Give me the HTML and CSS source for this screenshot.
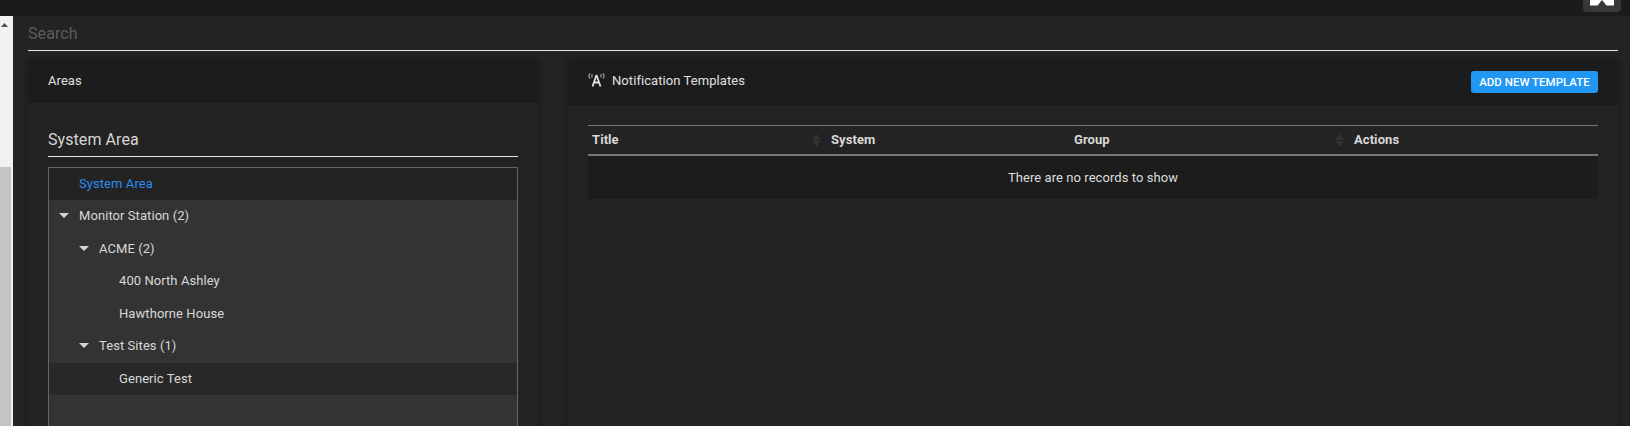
FILE: index.html
```html
<!DOCTYPE html>
<html lang="en">
<head>
<meta charset="utf-8">
<title>Notification Templates</title>
<link rel="stylesheet" href="styles.css">
</head>
<body>
<div class="topbar">
  <div class="logo-btn">
    <svg class="logo" width="24" height="6" viewBox="0 0 24 6"><path d="M0 0H24V5.500H16.500C15 4 13.500 1.500 12 0 10.500 1.500 9 4 7.500 5.500H0Z" fill="#fff"/></svg>
  </div>
</div>
<div class="shell">
  <div class="scrollbar">
    <svg class="scroll-arrow" width="9" height="6" viewBox="0 0 9 6"><path d="M4.500 1 8 5H1Z" fill="#505050"/></svg>
    <div class="scroll-thumb"></div>
  </div>
  <main class="main">
    <div class="search">Search</div>
    <div class="columns">
      <section class="card card-left">
        <header class="card-head head-left"><span class="card-title">Areas</span></header>
        <div class="card-body">
          <h2 class="area-title">System Area</h2>
          <div class="tree">
            <div class="row row-active"><span class="row-label">System Area</span></div>
            <div class="row"><span class="caret"></span><span class="row-label">Monitor Station (2)</span></div>
            <div class="row level-1"><span class="caret"></span><span class="row-label">ACME (2)</span></div>
            <div class="row level-2"><span class="row-label">400 North Ashley</span></div>
            <div class="row level-2"><span class="row-label">Hawthorne House</span></div>
            <div class="row level-1"><span class="caret"></span><span class="row-label">Test Sites (1)</span></div>
            <div class="row level-2 row-selected"><span class="row-label">Generic Test</span></div>
          </div>
        </div>
      </section>
      <section class="card card-right">
        <header class="card-head head-right">
          <div class="head-group">
            <svg class="tower" width="17" height="14" viewBox="0 0 17 14">
              <path d="M2 0.500C0.800 2 0.800 4 2 5.500M4.300 1.200C3.700 2.200 3.700 3.300 4.300 4.300M15 0.500C16.200 2 16.200 4 15 5.500M12.700 1.200C13.300 2.200 13.300 3.300 12.700 4.300" fill="none" stroke="#909090" stroke-width="1.400"/>
              <path d="M8.500 2 4.500 13.500M8.500 2 12.500 13.500M6 9.500H11" fill="none" stroke="#e0e0e0" stroke-width="1.800"/>
            </svg>
            <span class="card-title">Notification Templates</span>
          </div>
          <button class="add-btn">Add new template</button>
        </header>
        <div class="card-body table-body">
          <div class="table">
            <div class="thead">
              <div class="th">Title<svg class="sort" width="9" height="13" viewBox="0 0 9 13"><path d="M4.500 0 9 6H0ZM4.500 13 0 7H9Z" fill="#333"/></svg></div>
              <div class="th">System</div>
              <div class="th">Group<svg class="sort" width="9" height="13" viewBox="0 0 9 13"><path d="M4.500 0 9 6H0ZM4.500 13 0 7H9Z" fill="#333"/></svg></div>
              <div class="th">Actions</div>
            </div>
            <div class="empty">There are no records to show</div>
          </div>
        </div>
      </section>
    </div>
  </main>
</div>
</body>
</html>
```
FILE: styles.css
```css
* { box-sizing: border-box; }
html, body { height: 100%; }
body {
  margin: 0;
  height: 426px;
  overflow: hidden;
  display: flex;
  flex-direction: column;
  background: #232323;
  color: #ddd;
  font-family: Roboto, "Liberation Sans", sans-serif;
  font-size: 13px;
  letter-spacing: 0.07px;
}
.topbar {
  flex: 0 0 16px;
  background: #1b1b1b;
  display: flex;
  justify-content: flex-end;
  padding-right: 9px;
}
.logo-btn {
  width: 38px;
  height: 12px;
  background: #383838;
  border-radius: 0 0 4px 4px;
  display: flex;
  justify-content: center;
  overflow: hidden;
}
.logo { display: block; }
.shell { flex: 1; display: flex; min-height: 0; }
.scrollbar {
  flex: 0 0 13px;
  background: #f1f1f1;
  display: flex;
  flex-direction: column;
  justify-content: space-between;
}
.scroll-arrow { display: block; margin: 6px 0 0 0; }
.scroll-thumb { width: 11px; height: 259px; background: #c4c4c4; }
.main {
  flex: 1;
  min-width: 0;
  padding: 0 12px 0 15px;
  overflow: hidden;
}
.search {
  height: 35px;
  padding-top: 8px;
  border-bottom: 1px solid #e6e6e6;
  color: #5c5c5c;
  font-size: 16px;
  line-height: 20px;
  letter-spacing: 0.1px;
}
.columns {
  display: flex;
  gap: 30px;
  margin-top: 8px;
  height: 400px;
}
.card {
  background: #232323;
  border-radius: 6px 6px 0 0;
  box-shadow: 0 0 6px rgba(0, 0, 0, 0.35);
}
.card-left { flex: 0 0 510px; }
.card-right { flex: 1; min-width: 0; }
.card-head {
  background: #1c1c1c;
  border-radius: 6px 6px 0 0;
  display: flex;
  align-items: center;
  padding: 0 20px;
}
.head-left { height: 44px; padding-bottom: 2px; }
.head-right { height: 46px; justify-content: space-between; }
.head-group { display: flex; align-items: center; gap: 7px; padding-bottom: 4px; }
.tower { display: block; margin-top: -1px; }
.card-title { font-size: 13px; color: #e0e0e0; }
.add-btn {
  height: 22px;
  width: 127px;
  padding: 0;
  border: 0;
  border-radius: 3px;
  background: #2196f3;
  color: #fff;
  font: 500 11.500px Roboto, "Liberation Sans", sans-serif;
  letter-spacing: 0;
  text-transform: uppercase;
}
.card-body { padding: 0 20px; }
.area-title {
  margin: 26px 0 10px;
  padding-bottom: 6px;
  border-bottom: 1px solid #e6e6e6;
  font-size: 16px;
  font-weight: 400;
  line-height: 21px;
  color: #d6d6d6;
}
.tree {
  border: 1px solid #666;
  background: #333;
  height: 300px;
}
.row {
  height: 32.500px;
  display: flex;
  align-items: center;
  padding-left: 30px;
  padding-bottom: 1px;
  position: relative;
  color: #d8d8d8;
}
.row-active { height: 32px; padding-bottom: 2px; background: #232323; color: #2a8cf0; }
.row-selected { height: 32px; background: #282828; }
.level-1 { padding-left: 50px; }
.level-2 { padding-left: 70px; }
.caret {
  position: absolute;
  margin-left: -20px;
  width: 0;
  height: 0;
  border-left: 5px solid transparent;
  border-right: 5px solid transparent;
  border-top: 5px solid #d4d4d4;
}
.table-body { padding-top: 20px; }
.table { border-top: 1px solid #777; }
.thead {
  display: grid;
  grid-template-columns: 239px 243px 280px 1fr;
  height: 30px;
  align-items: center;
  border-bottom: 2px solid #777;
}
.th {
  padding: 0 0 2px 4px;
  font-weight: 700;
  font-size: 13px;
  color: #d8d8d8;
  display: flex;
  justify-content: space-between;
  align-items: center;
}
.sort { display: block; margin: 2px 6px 0 0; }
.empty {
  height: 43px;
  background: #1c1c1c;
  display: flex;
  align-items: center;
  justify-content: center;
  color: #ddd;
}
```
